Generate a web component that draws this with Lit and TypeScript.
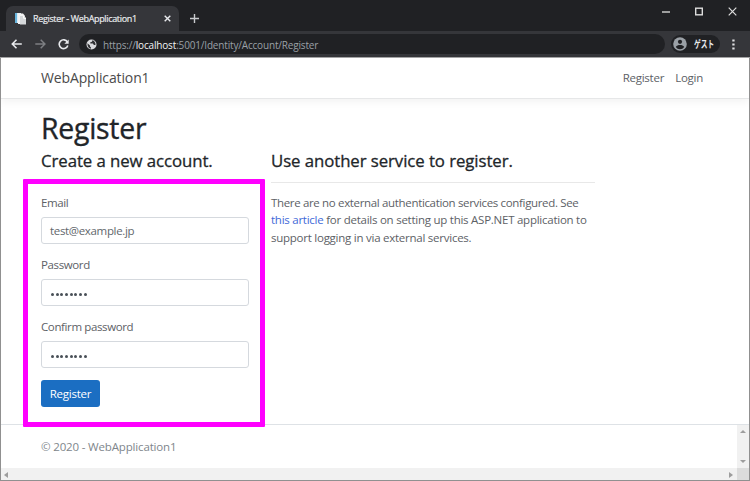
import { LitElement, html, css } from "lit";
import { customElement, property } from "lit/decorators.js";

@customElement("browser-chrome")
class BrowserChrome extends LitElement {
  static styles = css`
    :host { display: block; height: 58px; background: #202124; box-sizing: border-box; border-bottom: 1px solid #a5a5a6; color: #e8eaed; font-family: "Open Sans", "Noto Sans CJK JP", sans-serif; }
    svg { display: block; flex: none; }
    .strip { height: 31px; display: flex; align-items: flex-end; padding-left: 6px; box-sizing: border-box; }
    .tab { width: 173px; height: 25px; box-sizing: border-box; border-radius: 7px 7px 0 0; background: #35363a; display: flex; align-items: center; padding: 0 8px 0 8px; }
    .title { font-size: 9px; font-weight: 500; letter-spacing: -0.34px; margin-left: 6px; flex: 1; white-space: nowrap; -webkit-text-stroke: 0.2px; }
    .plus { margin: 0 0 8px 11px; }
    .spacer { flex: 1; }
    .window { display: flex; align-items: center; gap: 25px; margin: 0 13px 15px 0; }
    .bar { height: 26px; background: #35363a; display: flex; align-items: center; padding-left: 10px; }
    .fwd { margin: 0 12px 0 12px; }
    .address { width: 586px; height: 20px; border-radius: 10px; background: #202124; margin-left: 10px; display: flex; align-items: center; padding-left: 7px; box-sizing: border-box; flex: none; }
    .url { font-size: 10px; line-height: 14px; color: #9aa0a6; margin: 1px 0 0 6px; letter-spacing: -0.17px; white-space: nowrap; }
    .host { color: #f1f3f4; }
    .guest { margin-left: 6px; width: 49px; height: 18px; border-radius: 9px; background: #202124; display: flex; align-items: center; padding-left: 2px; box-sizing: border-box; flex: none; }
    .name { font: 700 10px/14px "Noto Sans CJK JP", sans-serif; margin: 0 0 1px 7px; display: inline-block; width: 20px; white-space: nowrap; transform: scaleX(0.67); transform-origin: left; }
    .dots { margin-left: 12px; }
  `;
  render() {
    return html`
      <div class="strip">
        <div class="tab">
          <svg width="13" height="13" viewBox="0 0 13 13"><path d="M1 1h6v10H1z" fill="#dcecf5"/><path d="M1 1h2v10H1z" fill="#68b5dd"/><path d="M4 1.5h5l2 2.3V12H4z" fill="#f3f3f3"/><path d="M6 4h4l2 2v6.5H6z" fill="#d5d8da"/><path d="M9.6 4v2.3H12" fill="none" stroke="#fff"/></svg>
          <span class="title">Register - WebApplication1</span>
          <svg width="7" height="7" viewBox="0 0 7 7"><path d="M.7.7l5.6 5.6M6.3.7L.7 6.3" stroke="#e8eaed" stroke-width="1.4"/></svg>
        </div>
        <svg class="plus" width="9" height="9" viewBox="0 0 9 9"><path d="M4.5 0v9M0 4.5h9" stroke="#c8cacd" stroke-width="1.4"/></svg>
        <span class="spacer"></span>
        <div class="window">
          <svg width="8" height="9" viewBox="0 0 8 9"><path d="M0 5h8" stroke="#d4d4d4" stroke-width="1.4"/></svg>
          <svg width="8" height="9" viewBox="0 0 8 9"><rect x=".7" y="1.2" width="6.6" height="6.6" fill="none" stroke="#ddd" stroke-width="1.4"/></svg>
          <svg width="9" height="9" viewBox="0 0 9 9"><path d="M.7.7l7.6 7.6M8.3.7L.7 8.3" stroke="#ddd" stroke-width="1.2"/></svg>
        </div>
      </div>
      <div class="bar">
        <svg width="13" height="10" viewBox="0 0 13 10"><path d="M11.8 5h-9M6.5.8L2.3 5l4.2 4.2" fill="none" stroke="#e8eaed" stroke-width="1.6"/></svg>
        <svg class="fwd" width="11" height="10" viewBox="0 0 11 10"><path d="M.3 5h9.5M5.7.8L9.9 5 5.7 9.2" fill="none" stroke="#7d7f83" stroke-width="1.5"/></svg>
        <svg width="11" height="11" viewBox="0 0 11 11"><path d="M9.4 3A4.4 4.4 0 1 0 9.8 6.5" fill="none" stroke="#e8eaed" stroke-width="1.6"/><path d="M10.7.5v4.3H6.4z" fill="#e8eaed"/></svg>
        <div class="address">
          <svg width="11" height="11" viewBox="0 0 11 11"><circle cx="5.5" cy="5.5" r="5" fill="#d9dadd"/><path d="M1.4 4.2L4 6.4v1L5 8.5v1.2C3 9.5 1.3 7.6 1.4 4.2zM6.4 1.3L6 2.7 4.3 3.3v1.2h2.6l1 1.4h1.6C9.7 3.6 8.4 1.8 6.4 1.3z" fill="#303134"/></svg>
          <span class="url">https://<span class="host">localhost</span>:5001/Identity/Account/Register</span>
        </div>
        <div class="guest">
          <svg width="14" height="14" viewBox="0 0 14 14"><circle cx="7" cy="7" r="6.8" fill="#9aa0a6"/><circle cx="7" cy="4.8" r="2.1" fill="#202124"/><path d="M2.8 9.9c.8-1.4 2.5-2 4.2-2s3.4.6 4.2 2a5 5 0 0 1-8.4 0z" fill="#202124"/></svg>
          <span class="name">ゲスト</span>
        </div>
        <svg class="dots" width="3" height="11" viewBox="0 0 3 11"><path d="M.3.4h2.3v2.2H.3zM.3 4.4h2.3v2.2H.3zM.3 8.4h2.3v2.2H.3z" fill="#dfe0e2"/></svg>
      </div>
    `;
  }
}

@customElement("form-field")
class FormField extends LitElement {
  @property() label = "";
  @property() value = "";
  @property({ type: Boolean }) secret = false;
  static styles = css`
    :host { display: block; height: 62px; }
    .label { display: block; height: 23px; line-height: 18px; font-size: 11.5px; letter-spacing: -0.38px; }
    .input { height: 27px; box-sizing: border-box; border: 1px solid #d5d9de; border-radius: 3px; display: flex; align-items: center; padding: 1px 9px 0 8px; font-size: 11.5px; letter-spacing: -0.34px; color: #62676c; }
    .dots { display: flex; gap: 1.7px; margin-left: 1px; }
    .dot { width: 3px; height: 3px; border-radius: 50%; background: #495057; margin-top: 2px; }
  `;
  render() {
    return html`<span class="label">${this.label}</span>
      <div class="input">${this.secret
        ? html`<span class="dots">${Array.from({ length: 8 }, () => html`<span class="dot"></span>`)}</span>`
        : this.value}</div>`;
  }
}

@customElement("app-root")
class AppRoot extends LitElement {
  static styles = css`
    :host { display: block; position: relative; width: 750px; height: 481px; overflow: hidden; background: #fff; font: 11.5px/17.3px "Open Sans", "Noto Sans", sans-serif; color: #5d6166; }
    .nav { height: 41px; box-sizing: border-box; margin: 0 1px; padding: 0 46px 0 40px; border-bottom: 1px solid #e6e7e8; box-shadow: 0 3px 8px rgba(0, 0, 0, 0.05); display: flex; align-items: center; gap: 11px; white-space: nowrap; }
    .brand { font-size: 14px; letter-spacing: -0.13px; color: #4b4b4b; flex: 1; }
    .link { letter-spacing: -0.25px; }
    .main { height: 325px; padding: 12px 41px 0; box-sizing: border-box; }
    .h1 { margin: 0; font-size: 28.4px; line-height: 34px; font-weight: 500; color: #212529; letter-spacing: -0.25px; -webkit-text-stroke: 0.35px; }
    .columns { display: grid; grid-template-columns: 208px 324px; gap: 22px; margin-top: 7px; }
    .h4 { margin: 0; font-size: 16.8px; line-height: 18px; font-weight: 500; color: #212529; letter-spacing: -0.07px; white-space: nowrap; -webkit-text-stroke: 0.3px; }
    .fields { margin-top: 24px; }
    .button { border: 0; width: 59px; height: 27px; border-radius: 3px; background: #1b6ec2; color: #fff; font: 500 11.5px "Open Sans", sans-serif; padding: 0 0 1px; letter-spacing: -0.22px; display: block; }
    .rule { height: 1px; background: #e8e8e8; margin: 12px 0 11px; }
    .text { margin: 0; white-space: nowrap; letter-spacing: -0.25px; }
    .lead { letter-spacing: -0.34px; }
    .anchor { color: #3f6ad8; }
    .foot { height: 44px; box-sizing: border-box; border-top: 1px solid #dee2e6; display: flex; justify-content: space-between; align-items: center; padding-left: 41px; color: #80868c; margin-right: 1px; }
    .copy { letter-spacing: -0.16px; }
    .vbar { width: 12px; height: 43px; background: #f1f1f1; display: flex; flex-direction: column; justify-content: space-between; align-items: center; padding: 5px 0; box-sizing: border-box; }
    .hbar { height: 13px; background: #f1f1f1; display: flex; justify-content: space-between; align-items: center; padding-left: 4px; }
    .hright { display: flex; align-items: center; gap: 4px; height: 13px; }
    .corner { width: 13px; height: 13px; background: #dcdcdc; }
    .arrow { display: block; fill: #9d9d9d; }
    .frame { position: absolute; inset: 58px 0 0 0; border: 1px solid #909090; border-top: 0; pointer-events: none; }
    .mark { position: absolute; left: 23px; top: 179px; width: 242px; height: 248px; box-sizing: border-box; border: 5px solid #f0f; border-radius: 1px; pointer-events: none; }
  `;
  render() {
    return html`
      <browser-chrome></browser-chrome>
      <div class="nav"><span class="brand">WebApplication1</span><span class="link">Register</span><span class="link">Login</span></div>
      <div class="main">
        <h1 class="h1">Register</h1>
        <div class="columns">
          <section>
            <h4 class="h4">Create a new account.</h4>
            <div class="fields">
              <form-field label="Email" value="test@example.jp"></form-field>
              <form-field label="Password" secret></form-field>
              <form-field label="Confirm password" secret></form-field>
            </div>
            <button class="button">Register</button>
          </section>
          <section>
            <h4 class="h4">Use another service to register.</h4>
            <div class="rule"></div>
            <p class="text"><span class="lead">There are no external authentication services configured. See</span><br /><span class="anchor">this article</span> for details on setting up this ASP.NET application to<br />support logging in via external services.</p>
          </section>
        </div>
      </div>
      <div class="foot"><span class="copy">© 2020 - WebApplication1</span>
        <div class="vbar">
          <svg class="arrow" width="6" height="3"><path d="M0 3l3-3 3 3z"/></svg>
          <svg class="arrow" width="6" height="3"><path d="M0 0l3 3 3-3z"/></svg>
        </div>
      </div>
      <div class="hbar">
        <svg class="arrow" width="4" height="6"><path d="M4 0L0 3l4 3z"/></svg>
        <div class="hright"><svg class="arrow" width="4" height="6"><path d="M0 0l4 3-4 3z"/></svg><div class="corner"></div></div>
      </div>
      <div class="frame"></div>
      <div class="mark"></div>
    `;
  }
}
